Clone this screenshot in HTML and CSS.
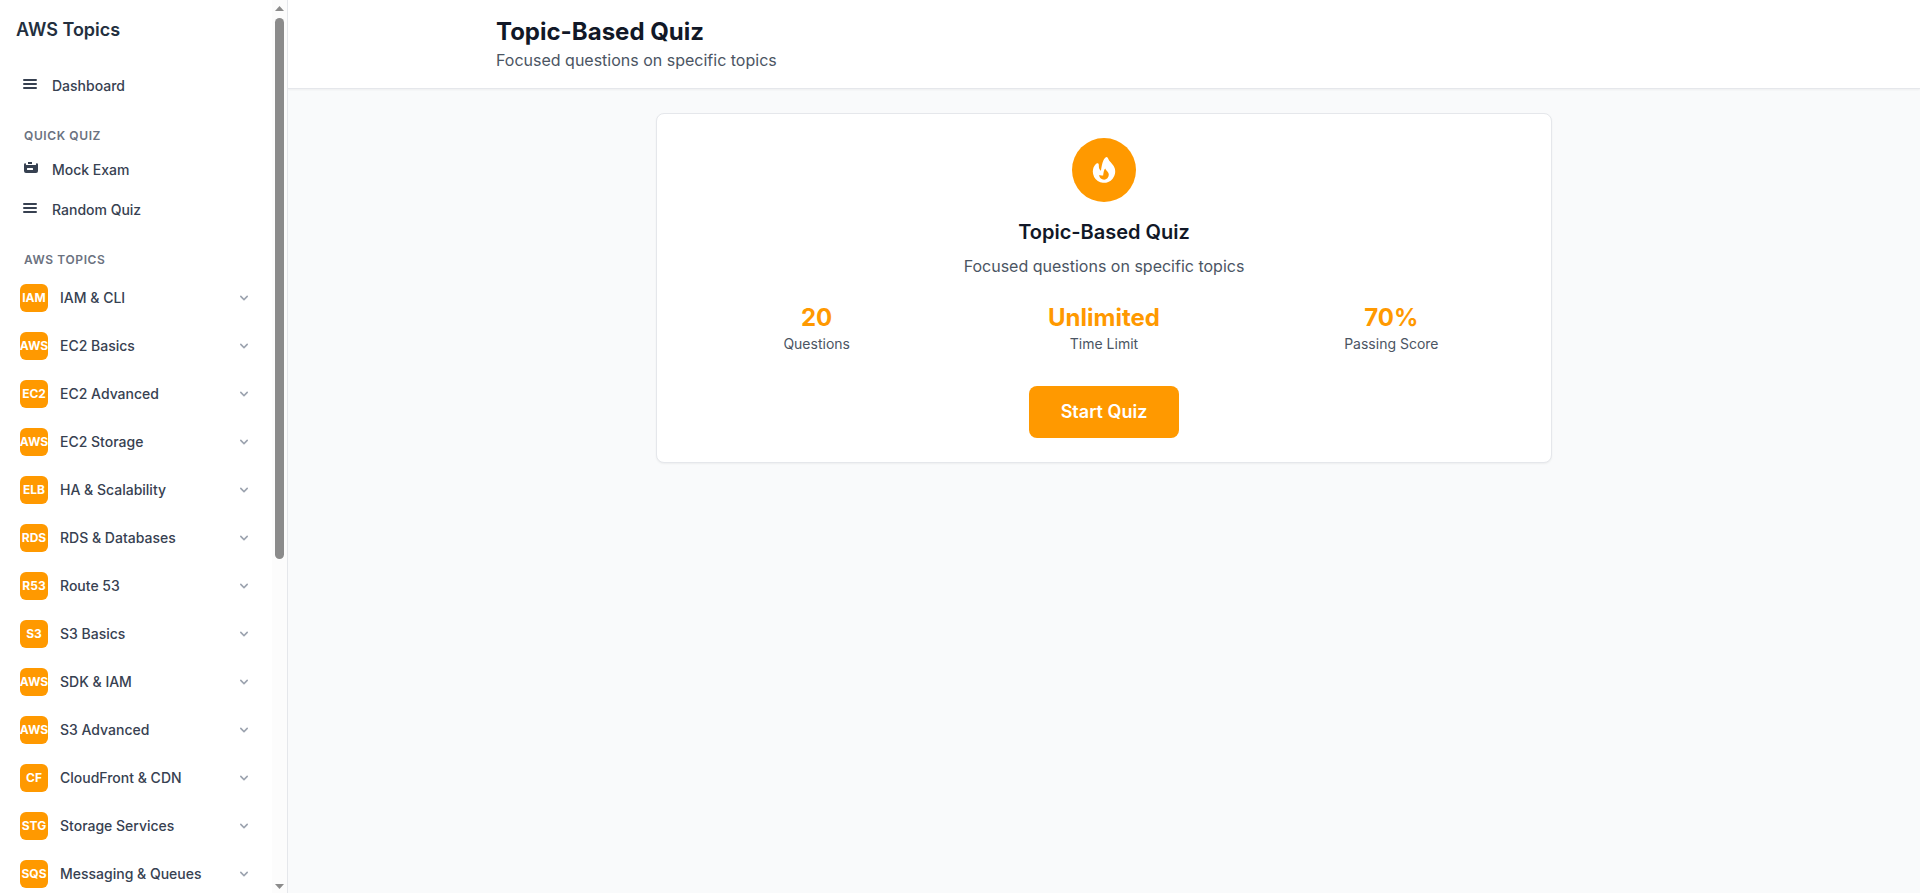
FILE: index.html
```html
<!DOCTYPE html>
<html lang="en">
<head>
<meta charset="utf-8">
<meta name="viewport" content="width=device-width, initial-scale=1">
<title>Topic-Based Quiz</title>
<link rel="stylesheet" href="styles.css">
</head>
<body>
<svg class="sprite" aria-hidden="true">
  <symbol id="menu" viewBox="0 0 20 20"><path d="M3 4a1 1 0 011-1h12a1 1 0 110 2H4a1 1 0 01-1-1zm0 4a1 1 0 011-1h12a1 1 0 110 2H4a1 1 0 01-1-1zm0 4a1 1 0 011-1h12a1 1 0 110 2H4a1 1 0 01-1-1z"/></symbol>
  <symbol id="exam" viewBox="0 0 20 20"><path d="M8 2h4v2H8z"/><path fill-rule="evenodd" d="M4 4.500a1.500 1.500 0 011.500-1.500L6 4.500A.5.5 0 006.500 5h9a.5.5 0 00.5-.5L16.500 3A1.500 1.500 0 0118 4.500V11a2 2 0 01-2 2H6a2 2 0 01-2-2V4.500zM7.500 8a.5.5 0 00-.5.5v1a.5.5 0 00.5.5h5a.5.5 0 00.5-.5v-1a.5.5 0 00-.5-.5h-5z"/></symbol>
  <symbol id="chevron" viewBox="0 0 20 20"><path fill-rule="evenodd" d="M5.293 7.293a1 1 0 011.414 0L10 10.586l3.293-3.293a1 1 0 111.414 1.414l-4 4a1 1 0 01-1.414 0l-4-4a1 1 0 010-1.414z"/></symbol>
</svg>
<div class="app">
  <aside class="sidebar">
    <div class="sidebar-scroll">
      <h2 class="brand">AWS Topics</h2>
      <nav class="nav">
        <div class="links">
          <a class="link" href="#dashboard"><svg class="link-icon"><use href="#menu"/></svg>Dashboard</a>
        </div>
        <section>
          <h3 class="group-title">QUICK QUIZ</h3>
          <div class="links">
            <a class="link" href="#mock"><svg class="link-icon"><use href="#exam"/></svg>Mock Exam</a>
            <a class="link" href="#random"><svg class="link-icon"><use href="#menu"/></svg>Random Quiz</a>
          </div>
        </section>
        <section>
          <h3 class="group-title">AWS TOPICS</h3>
          <div class="links">
            <button class="topic" type="button"><span class="badge">IAM</span><span class="topic-name">IAM &amp; CLI</span><svg class="chevron"><use href="#chevron"/></svg></button>
            <button class="topic" type="button"><span class="badge">AWS</span><span class="topic-name">EC2 Basics</span><svg class="chevron"><use href="#chevron"/></svg></button>
            <button class="topic" type="button"><span class="badge">EC2</span><span class="topic-name">EC2 Advanced</span><svg class="chevron"><use href="#chevron"/></svg></button>
            <button class="topic" type="button"><span class="badge">AWS</span><span class="topic-name">EC2 Storage</span><svg class="chevron"><use href="#chevron"/></svg></button>
            <button class="topic" type="button"><span class="badge">ELB</span><span class="topic-name">HA &amp; Scalability</span><svg class="chevron"><use href="#chevron"/></svg></button>
            <button class="topic" type="button"><span class="badge">RDS</span><span class="topic-name">RDS &amp; Databases</span><svg class="chevron"><use href="#chevron"/></svg></button>
            <button class="topic" type="button"><span class="badge">R53</span><span class="topic-name">Route 53</span><svg class="chevron"><use href="#chevron"/></svg></button>
            <button class="topic" type="button"><span class="badge">S3</span><span class="topic-name">S3 Basics</span><svg class="chevron"><use href="#chevron"/></svg></button>
            <button class="topic" type="button"><span class="badge">AWS</span><span class="topic-name">SDK &amp; IAM</span><svg class="chevron"><use href="#chevron"/></svg></button>
            <button class="topic" type="button"><span class="badge">AWS</span><span class="topic-name">S3 Advanced</span><svg class="chevron"><use href="#chevron"/></svg></button>
            <button class="topic" type="button"><span class="badge">CF</span><span class="topic-name">CloudFront &amp; CDN</span><svg class="chevron"><use href="#chevron"/></svg></button>
            <button class="topic" type="button"><span class="badge">STG</span><span class="topic-name">Storage Services</span><svg class="chevron"><use href="#chevron"/></svg></button>
            <button class="topic" type="button"><span class="badge">SQS</span><span class="topic-name">Messaging &amp; Queues</span><svg class="chevron"><use href="#chevron"/></svg></button>
          </div>
        </section>
      </nav>
    </div>
    <div class="scrollbar" aria-hidden="true">
      <svg class="arrow" viewBox="0 0 9 5"><path d="M4.5 0L9 5H0z"/></svg>
      <div class="track"><div class="thumb"></div></div>
      <svg class="arrow" viewBox="0 0 9 5"><path d="M4.5 5L0 0h9z"/></svg>
    </div>
  </aside>
  <div class="page">
    <header class="header">
      <div class="header-inner">
        <h1 class="title">Topic-Based Quiz</h1>
        <p class="subtitle">Focused questions on specific topics</p>
      </div>
    </header>
    <main class="main">
      <div class="card">
        <div class="disc">
          <svg class="flame" viewBox="0 0 20 20" aria-hidden="true"><path fill-rule="evenodd" d="M12.395 2.553a1 1 0 00-1.45-.385c-.345.23-.614.558-.822.88-.214.33-.403.713-.57 1.116-.334.804-.614 1.768-.84 2.734a31.365 31.365 0 00-.613 3.58 2.64 2.64 0 01-.945-1.067c-.328-.68-.398-1.534-.398-2.654A1 1 0 005.05 6.05 6.981 6.981 0 003 11a7 7 0 1011.95-4.95c-.592-.591-.98-.985-1.348-1.467-.363-.476-.724-1.063-1.207-2.03zM12.12 15.12A3 3 0 017 13s.879.5 2.5.5c0-1 .5-4 1.25-4.5.5 1 .786 1.293 1.371 1.879A2.99 2.99 0 0113 13a2.99 2.99 0 01-.879 2.121z"/></svg>
        </div>
        <h2 class="card-title">Topic-Based Quiz</h2>
        <p class="subtitle">Focused questions on specific topics</p>
        <div class="stats">
          <div><div class="value">20</div><div class="label">Questions</div></div>
          <div><div class="value">Unlimited</div><div class="label">Time Limit</div></div>
          <div><div class="value">70%</div><div class="label">Passing Score</div></div>
        </div>
        <button class="start" type="button">Start Quiz</button>
      </div>
    </main>
  </div>
</div>
</body>
</html>
```
FILE: styles.css
```css
* { box-sizing: border-box; margin: 0; padding: 0; }
body { font-family: Inter, "Liberation Sans", sans-serif; font-size: 16px; line-height: 24px; color: #111827; background: #f9fafb; }
button { font: inherit; border: 0; background: none; cursor: pointer; }
svg { fill: currentColor; flex: none; }
.sprite { display: none; }

.app { display: flex; height: 100vh; }

.sidebar { display: flex; flex: none; width: 288px; background: #fff; border-right: 1px solid #e5e7eb; }
.sidebar-scroll { flex: 1; min-width: 0; overflow-y: auto; scrollbar-width: none; }
.brand { padding: 16px; font-size: 18px; line-height: 28px; font-weight: 600; color: #232f3e; }
.nav { display: flex; flex-direction: column; gap: 24px; padding: 8px; }
.links { display: flex; flex-direction: column; gap: 4px; }
.group-title { padding: 0 16px; margin-bottom: 8px; font-size: 12px; line-height: 16px; font-weight: 600; letter-spacing: 0.05em; color: #6b7280; }
.link { display: flex; align-items: center; gap: 12px; padding: 8px 12px; font-size: 14px; line-height: 20px; font-weight: 500; color: #374151; text-decoration: none; }
.link-icon { width: 20px; height: 20px; }
.topic { display: flex; align-items: center; gap: 12px; padding: 8px 12px; font-size: 14px; line-height: 20px; font-weight: 500; color: #374151; text-align: left; }
.badge { display: flex; align-items: center; justify-content: center; width: 28px; height: 28px; border-radius: 6px; background: #ff9900; color: #fff; font-size: 12px; line-height: 16px; font-weight: 700; }
.topic-name { flex: 1; }
.chevron { width: 16px; height: 16px; color: #9ca3af; }

.scrollbar { display: flex; flex-direction: column; align-items: center; gap: 7px; width: 15px; padding: 6px 0 4px; background: #fcfcfc; color: #8b8b8b; }
.arrow { width: 9px; height: 5px; }
.track { flex: 1; width: 9px; }
.thumb { height: 63%; border-radius: 5px; background: #8b8b8b; }

.page { flex: 1; min-width: 0; overflow-y: auto; }
.header { background: #fff; border-bottom: 1px solid #e5e7eb; box-shadow: 0 1px 2px rgba(0, 0, 0, 0.05); }
.header-inner { max-width: 1280px; margin: 0 auto; padding: 16px 32px; }
.title { font-size: 24px; line-height: 32px; font-weight: 700; }
.subtitle { color: #4b5563; }

.main { padding: 24px; }
.card { display: flex; flex-direction: column; align-items: center; max-width: 896px; margin: 0 auto; padding: 24px; background: #fff; border: 1px solid #e5e7eb; border-radius: 8px; box-shadow: 0 1px 2px rgba(0, 0, 0, 0.05); text-align: center; }
.disc { display: flex; align-items: center; justify-content: center; width: 64px; height: 64px; border-radius: 50%; background: #ff9900; color: #fff; }
.flame { width: 32px; height: 32px; }
.card-title { margin: 16px 0 8px; font-size: 20px; line-height: 28px; font-weight: 600; }
.stats { display: grid; grid-template-columns: repeat(3, 1fr); gap: 16px; width: 100%; margin: 24px 0 32px; }
.value { font-size: 24px; line-height: 32px; font-weight: 700; color: #ff9900; }
.label { font-size: 14px; line-height: 20px; color: #4b5563; }
.start { padding: 12px 32px; border-radius: 8px; background: #ff9900; color: #fff; font-size: 18px; line-height: 28px; font-weight: 600; }
```
